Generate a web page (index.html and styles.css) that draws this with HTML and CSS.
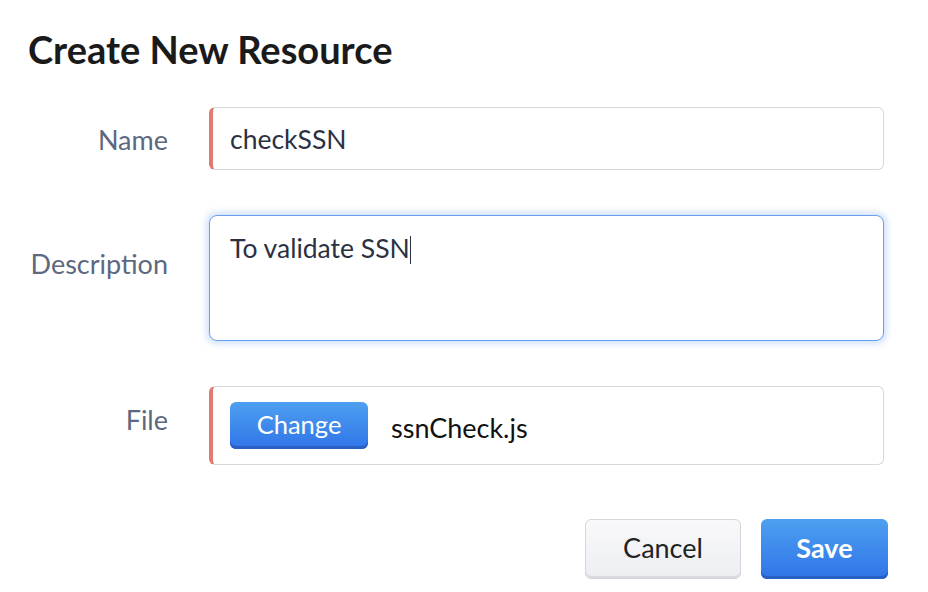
FILE: index.html
```html
<!DOCTYPE html>
<html>
<head>
<meta charset="utf-8">
<link rel="stylesheet" href="styles.css">
</head>
<body>
<div class="dialog">
  <h1 class="title">Create New Resource</h1>
  <div class="form">
    <div class="row row-name">
      <label class="label">Name</label>
      <div class="field field-required field-name"><span class="value">checkSSN</span></div>
    </div>
    <div class="row row-desc">
      <label class="label">Description</label>
      <div class="field field-focus field-desc"><span class="value">To validate SSN</span><span class="caret"></span></div>
    </div>
    <div class="row row-file">
      <label class="label">File</label>
      <div class="field field-required field-file">
        <button class="btn btn-primary btn-change">Change</button>
        <span class="filename">ssnCheck.js</span>
      </div>
    </div>
  </div>
  <div class="actions">
    <button class="btn btn-default btn-cancel">Cancel</button>
    <button class="btn btn-primary btn-save">Save</button>
  </div>
</div>
</body>
</html>
```
FILE: styles.css
```css
html, body {
  margin: 0;
  padding: 0;
  background: #ffffff;
}
body {
  font-family: Lato, "Open Sans", sans-serif;
  width: 928px;
  height: 592px;
  overflow: hidden;
}
.dialog {
  padding: 26px 40px 0 28px;
}
.title {
  margin: 0;
  font-size: 38px;
  font-weight: 700;
  color: #1a1a1a;
  line-height: 46px;
}
.form {
  margin-top: 35px;
  display: flex;
  flex-direction: column;
  gap: 45px;
}
.row {
  display: flex;
  align-items: flex-start;
  gap: 41px;
}
.label {
  width: 140px;
  text-align: right;
  font-size: 27px;
  line-height: 34px;
  color: #5d6880;
}
.row-name .label {
  padding-top: 16px;
}
.row-desc .label {
  padding-top: 32px;
}
.row-file .label {
  padding-top: 17px;
}
.field {
  box-sizing: border-box;
  width: 675px;
  background: #fff;
  border: 1px solid #d6d8dc;
  border-radius: 6px;
  display: flex;
  align-items: center;
  padding-left: 20px;
  color: #2b3142;
  font-size: 26.5px;
}
.field-required {
  border-left: 4px solid #e27a72;
  padding-left: 17px;
}
.field-name {
  height: 63px;
}
.field-desc {
  height: 126px;
  align-items: flex-start;
  padding-top: 16px;
  border-radius: 8px;
}
.field-focus {
  border: 1.5px solid #6a9ff0;
  box-shadow: 0 0 6px 3px rgba(130, 172, 242, 0.35);
}
.caret {
  display: inline-block;
  width: 1.5px;
  height: 28px;
  background: #2b3142;
  margin-top: 4px;
}
.field-file {
  height: 79px;
  gap: 23px;
}
.filename {
  color: #111;
  font-size: 27px;
  padding-top: 3px;
}
.btn {
  font-family: Lato, "Open Sans", sans-serif;
  font-size: 27px;
  border-radius: 6px;
  cursor: pointer;
}
.btn-primary {
  color: #fff;
  border: none;
  background: linear-gradient(#4da0f0, #3074e8);
  box-shadow: inset 0 -3px 0 #2a5fc4;
}
.btn-change {
  width: 138px;
  height: 47px;
  padding: 0 0 3px 0;
  font-size: 25.5px;
}
.actions {
  display: flex;
  justify-content: flex-end;
  gap: 20px;
  margin-top: 54px;
  width: 860px;
}
.btn-default {
  background: linear-gradient(#f9f9fb, #eceef2);
  border: 1px solid #d4d6db;
  box-shadow: inset 0 -2px 0 #d8dadf;
  color: #222;
  padding-bottom: 4px;
}
.btn-cancel {
  width: 156px;
  height: 60px;
}
.btn-save {
  width: 127px;
  height: 60px;
  font-weight: 700;
  padding-bottom: 4px;
}
```
